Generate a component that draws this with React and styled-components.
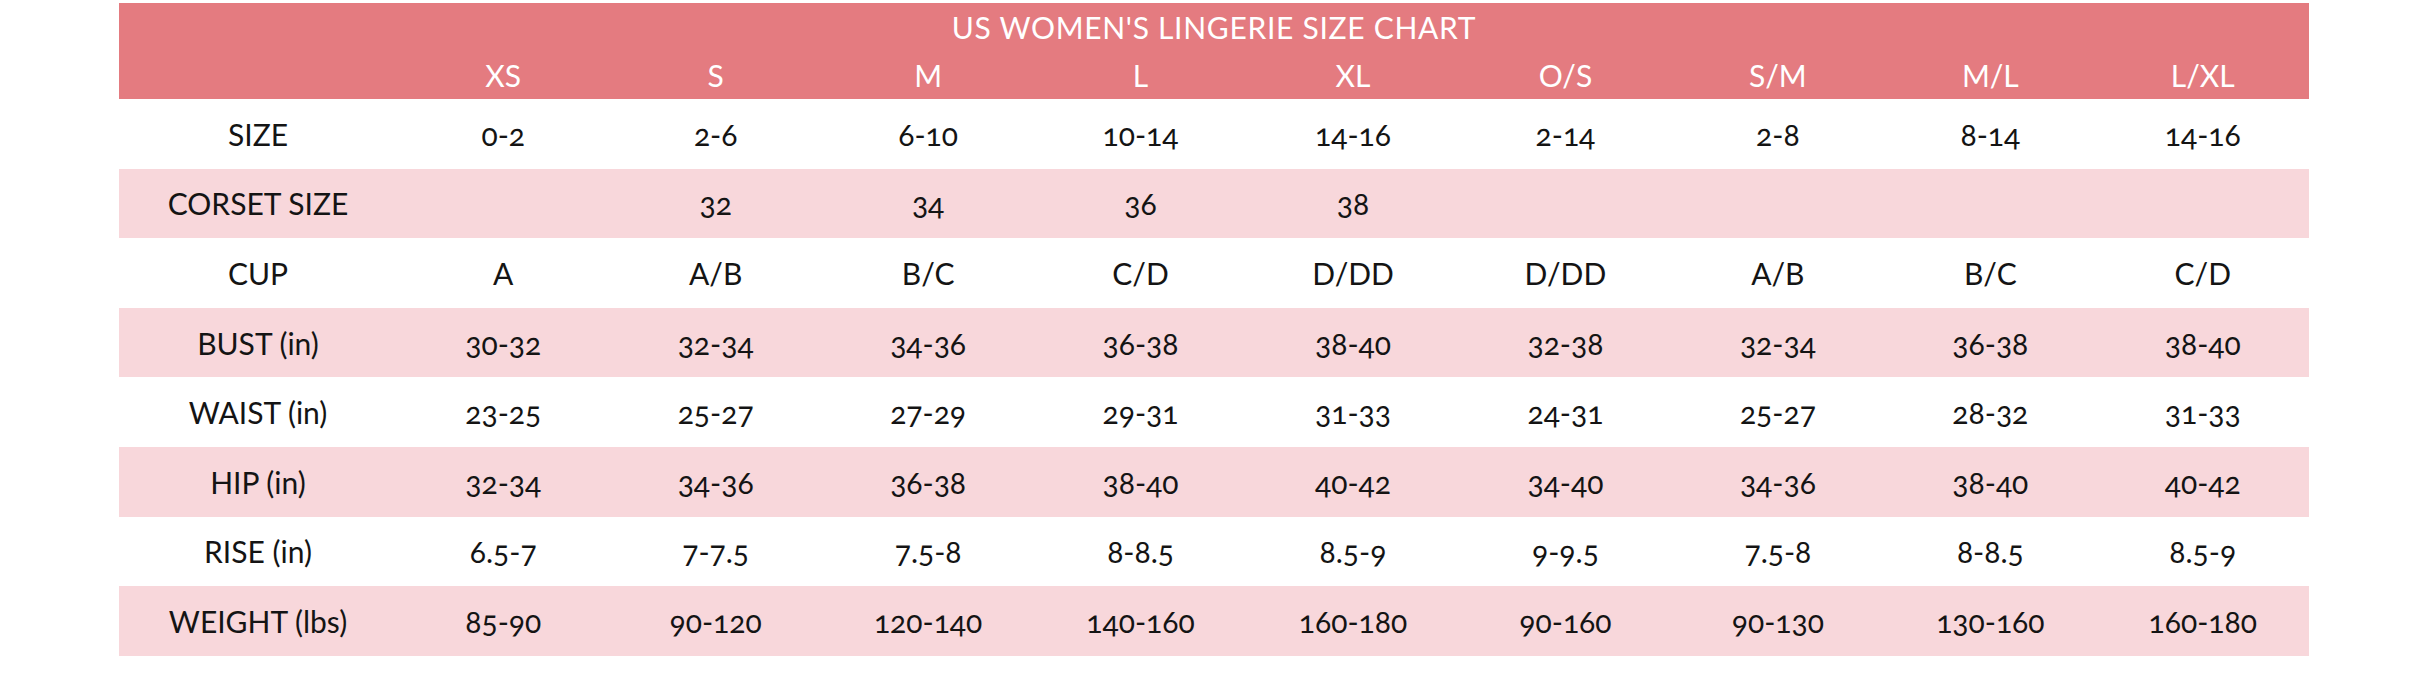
import React from "react";
import styled, { createGlobalStyle } from "styled-components";

const Global = createGlobalStyle`
  html, body { margin: 0; padding: 0; background: #ffffff; }
  body {
    font-family: Lato, "Open Sans", "Liberation Sans", sans-serif;
    font-variant-numeric: oldstyle-nums;
    font-feature-settings: "onum" 1;
  }
`;

const Page = styled.div`
  padding: 3px 0 0 119px;
`;

const Chart = styled.div`
  width: 2190px;
`;

const Header = styled.div`
  background: #e47b80;
  color: #ffffff;
`;

const Title = styled.div`
  height: 48px;
  display: flex;
  align-items: center;
  justify-content: center;
  font-size: 30px;
  letter-spacing: 0.7px;
`;

const Row = styled.div`
  display: grid;
  grid-template-columns: 278px repeat(9, 1fr);
  height: ${(p) => p.$h}px;
  background: ${(p) => p.$bg};
  color: ${(p) => p.$fg};
`;

const Cell = styled.div`
  display: flex;
  align-items: center;
  justify-content: center;
  font-size: 30px;
  white-space: nowrap;
`;

const sizes = ["XS", "S", "M", "L", "XL", "O/S", "S/M", "M/L", "L/XL"];

const rows = [
  ["SIZE", ["0-2", "2-6", "6-10", "10-14", "14-16", "2-14", "2-8", "8-14", "14-16"]],
  ["CORSET SIZE", ["", "32", "34", "36", "38", "", "", "", ""]],
  ["CUP", ["A", "A/B", "B/C", "C/D", "D/DD", "D/DD", "A/B", "B/C", "C/D"]],
  ["BUST (in)", ["30-32", "32-34", "34-36", "36-38", "38-40", "32-38", "32-34", "36-38", "38-40"]],
  ["WAIST (in)", ["23-25", "25-27", "27-29", "29-31", "31-33", "24-31", "25-27", "28-32", "31-33"]],
  ["HIP (in)", ["32-34", "34-36", "36-38", "38-40", "40-42", "34-40", "34-36", "38-40", "40-42"]],
  ["RISE (in)", ["6.5-7", "7-7.5", "7.5-8", "8-8.5", "8.5-9", "9-9.5", "7.5-8", "8-8.5", "8.5-9"]],
  ["WEIGHT (lbs)", ["85-90", "90-120", "120-140", "140-160", "160-180", "90-160", "90-130", "130-160", "160-180"]],
];

export default function App() {
  return (
    <>
      <Global />
      <Page>
        <Chart>
          <Header>
            <Title>US WOMEN'S LINGERIE SIZE CHART</Title>
            <Row $h={48} $bg="transparent" $fg="#ffffff">
              <Cell />
              {sizes.map((s) => (
                <Cell key={s}>{s}</Cell>
              ))}
            </Row>
          </Header>
          {rows.map(([label, vals], i) => (
            <Row key={label} $h={69.6} $bg={i % 2 ? "#f8d7db" : "#ffffff"} $fg="#141414">
              <Cell>{label}</Cell>
              {vals.map((v, j) => (
                <Cell key={j}>{v}</Cell>
              ))}
            </Row>
          ))}
        </Chart>
      </Page>
    </>
  );
}
